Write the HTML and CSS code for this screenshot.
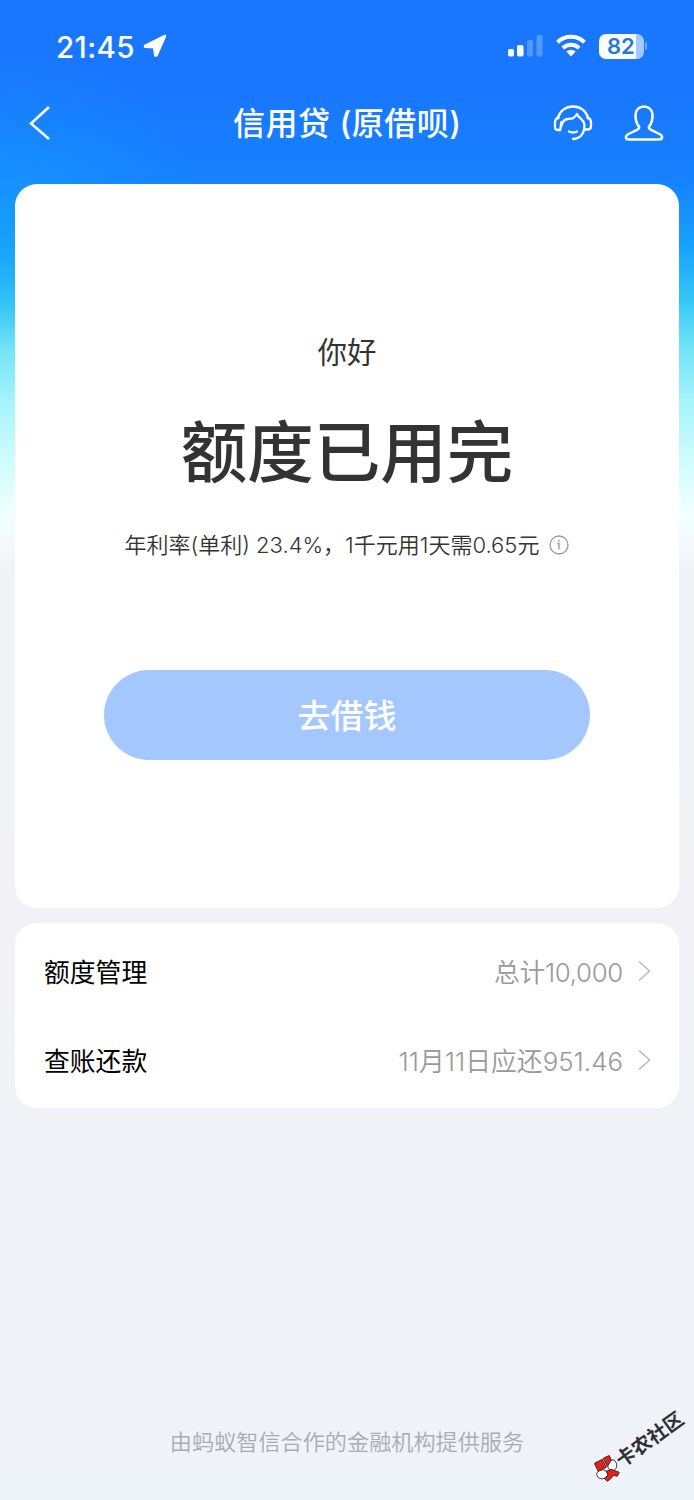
FILE: index.html
```html
<!DOCTYPE html>
<html lang="zh-CN">
<head>
<meta charset="utf-8">
<title>信用贷</title>
<link rel="stylesheet" href="styles.css">
</head>
<body>
<div class="page">
  <div class="status">
    <span class="time">21:45</span>
    <svg class="loc" width="24" height="24" viewBox="0 0 24 24"><path d="M2 11.800 22 2 13.400 21.500 12.300 21.500 11.300 13.300 2.200 12.800z" fill="#fff" stroke="#fff" stroke-width="2.600" stroke-linejoin="round"/></svg>
    <svg class="signal" width="35" height="23" viewBox="0 0 35 23"><rect x="0" y="15" width="6" height="7.500" rx="1.700" fill="#fff"/><rect x="9" y="11" width="6.500" height="11.500" rx="1.700" fill="#fff"/><rect x="19" y="6" width="6" height="16.500" rx="1.700" fill="#fff" opacity=".25"/><rect x="28.500" y="1" width="6" height="21.500" rx="1.700" fill="#fff" opacity=".25"/></svg>
    <svg class="wifi" width="30" height="23" viewBox="0 0 30 23"><g fill="none" stroke="#fff" stroke-width="4"><path d="M1.500 8.200a19.500 19.500 0 0 1 27 0"/><path d="M6.800 14a11.800 11.800 0 0 1 16.400 0"/></g><path d="M10.300 17.600a7.500 7.500 0 0 1 9.400 0L15 22.500z" fill="#fff"/></svg>
    <div class="battery"><span>82</span></div>
    <i class="cap"></i>
  </div>
  <div class="nav">
    <svg class="back" width="22" height="36" viewBox="0 0 22 36"><path d="M20 2 2 18.500 20 34" fill="none" stroke="#fff" stroke-width="2.500"/></svg>
    <h1 class="title">信用贷 (原借呗)</h1>
    <svg class="service" width="40" height="38" viewBox="0 0 40 38" fill="none" stroke="#fff" stroke-width="2.300" stroke-linecap="round" stroke-linejoin="round"><path d="M5 13.500C7 6.500 13 2.500 20 2.500s13 4 15 11"/><path d="M8.500 18 7.200 26H4.500Q2 26 2 23v-4.500q0-4 3.500-4.500"/><path d="M8.500 21.500c.8-3.500 2.500-6 6-6.500 4-.3 6.500 0 9.500-5 1.500 4 6.500 5 7.300 10 .7 8.500-3.300 14.800-11.300 15"/><path d="M34.500 14q3.500.5 3.500 4.500V22q0 3.500-3 3.500h-3.500"/><path d="M16 27.500q4 2 8 0"/></svg>
    <svg class="user" width="40" height="38" viewBox="0 0 40 38"><path d="M15 22.500C12 19.500 11.500 15 11.500 11c0-5 3.500-8.500 8.500-8.500s8.500 3.500 8.500 8.500c0 4-.5 8.500-3.500 11.500-.5 2 .5 2.500 2 3.300l8.500 4.200c3.500 1.700 3.500 5.500-.5 5.500H5c-4 0-4-3.800-.5-5.500l8.500-4.200c1.500-.8 2.500-1.300 2-3.300z" fill="none" stroke="#fff" stroke-width="2.500"/></svg>
  </div>
  <div class="card main-card">
    <div class="hello">你好</div>
    <div class="headline">额度已用完</div>
    <div class="rate"><span>年利率(单利) 23.4%，</span><span>1千元用1天需0.65元</span><svg width="20" height="20" viewBox="0 0 20 20" fill="none" stroke="#999" stroke-width="1.300"><circle cx="10" cy="10" r="9"/><path d="M8.500 8.500H10v6M10 5v1.800"/></svg></div>
    <div class="button">去借钱</div>
  </div>
  <div class="card list">
    <div class="row"><span class="label">额度管理</span><span class="value">总计10,000</span><svg class="chev" width="13" height="22" viewBox="0 0 13 22"><path d="M1 1.500 11.500 11 1 20.500" fill="none" stroke="#bbb" stroke-width="1.600"/></svg></div>
    <div class="row"><span class="label">查账还款</span><span class="value due">11月11日应还951.46</span><svg class="chev" width="13" height="22" viewBox="0 0 13 22"><path d="M1 1.500 11.500 11 1 20.500" fill="none" stroke="#bbb" stroke-width="1.600"/></svg></div>
  </div>
  <div class="foot">由蚂蚁智信合作的金融机构提供服务</div>
  <div class="mark">
    <svg class="logo" width="28" height="28" viewBox="0 0 28 28"><g stroke="#222" stroke-width=".9"><ellipse cx="8" cy="19" rx="5.500" ry="4.500" fill="#fff"/><ellipse cx="18" cy="10" rx="4.500" ry="5.500" fill="#fff"/><path d="m0 8 8-4 4 8-8 4z" fill="#e8201c"/><path d="m9 3 6-3 2 5-4 6z" fill="#e8201c"/><path d="m12 16 5-2 8 3-2 4-4-1-2 3-4 3-3-3 4-3z" fill="#e8201c"/></g></svg>
    <span>卡农社区</span>
  </div>
</div>
</body>
</html>
```
FILE: styles.css
```css
* { box-sizing: border-box; }
body { margin: 0; }
svg { display: block; flex: none; }
.page {
  position: relative;
  width: 694px;
  height: 1500px;
  overflow: hidden;
  display: flex;
  flex-direction: column;
  font-family: Inter, "Noto Sans CJK SC", sans-serif;
  color: #333;
  background:
    radial-gradient(ellipse 200px 150px at 0 200px, rgba(20,165,255,.45), rgba(20,165,255,0)),
    linear-gradient(#1976ff 0, #1977ff 90px, #1682ff 180px, #18a0fc 245px, #35c6f6 300px, #6ee3f8 345px, #a5f3fb 400px, #d2fdfd 465px, #f1ffff 515px, #f4f9fb 545px, #f0f2f6 575px, #f2f2f6 900px, #f1f2f7 1150px, #eff3fa 1500px);
}
.status { display: flex; height: 92px; padding: 34px 0 0 56px; color: #fff; align-items: flex-start; }
.time { width: 80px; font-size: 29.500px; line-height: 26px; font-weight: 550; letter-spacing: .4px; white-space: nowrap; }
.loc { margin: 0 0 0 7px; }
.signal { margin-left: 341px; }
.wifi { margin: 0 0 0 13px; }
.battery { margin-left: 13px; width: 45px; height: 25px; border-radius: 7px; background: linear-gradient(90deg, #fff 37px, #a4c9ff 37px); color: #2878d8; font-size: 22px; line-height: 25px; font-weight: 600; padding-left: 8px; }
.cap { width: 2px; height: 8px; margin: 8px 0 0 1px; border-radius: 0 3px 3px 0; background: #75adff; }
.nav { height: 92px; display: flex; padding-left: 29px; align-items: flex-start; }
.back { margin-top: 13px; }
.title { margin: 8px 0 0 182px; width: 320px; font-size: 32px; line-height: 48px; letter-spacing: .5px; font-weight: 500; color: #fff; white-space: pre; }
.service { margin: 12px 0 0 0; }
.user { margin: 12px 0 0 31px; }
.card { margin: 0 15px; border-radius: 22px; background: #fff; }
.main-card { height: 724px; padding-top: 144px; display: flex; flex-direction: column; align-items: center; }
.hello { font-size: 29.500px; line-height: 48px; }
.headline { margin-top: 27px; font-size: 66.500px; line-height: 100px; font-weight: 500; }
.rate { margin-top: 25px; height: 34px; font-size: 22px; line-height: 34px; display: flex; align-items: center; font-weight: 350; white-space: nowrap; }
.rate svg { margin-left: 10px; }
.button { margin-top: 108px; width: 486px; height: 90px; border-radius: 45px; background: #a4c7fe; color: #fff; font-size: 33px; line-height: 92px; text-align: center; font-weight: 500; }
.list { margin-top: 15px; height: 185px; padding: 3px 28px 0 29px; }
.row { height: 89px; display: flex; align-items: center; font-size: 25.800px; }
.label { color: #000; }
.value { margin-left: auto; color: #999; font-weight: 350; letter-spacing: -.3px; }
.due { letter-spacing: .05px; }
.chev { margin-left: 15px; }
.foot { margin-top: 317px; text-align: center; font-size: 22.150px; line-height: 34px; font-weight: 350; color: #a9acb1; }
.mark { position: absolute; left: 587px; top: 1433px; display: flex; align-items: center; transform: rotate(-36deg); font-size: 19.500px; line-height: 28px; font-weight: 700; color: #2e3036; white-space: nowrap; }
.logo { transform: rotate(36deg); }
.mark span { margin-left: -2px; }
```
